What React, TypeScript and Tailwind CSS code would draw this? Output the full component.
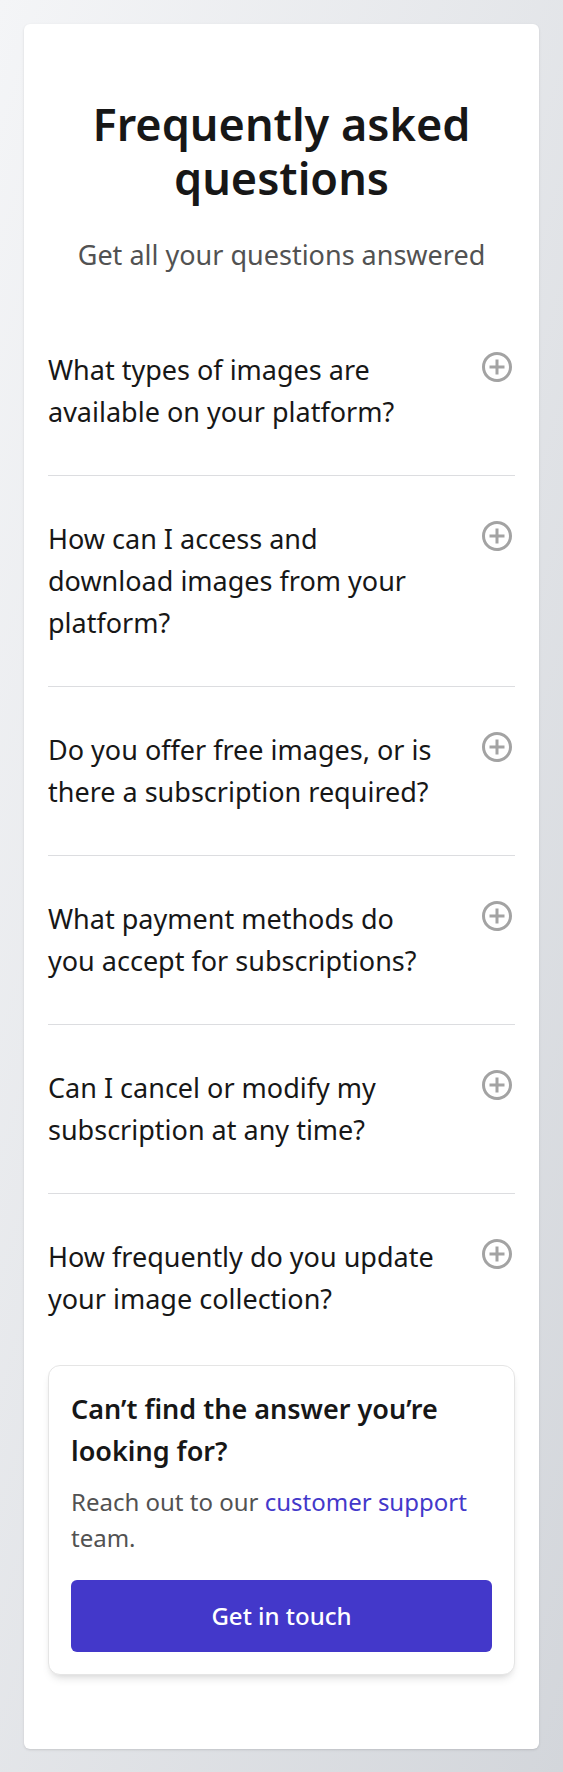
import { MdOutlineAddCircleOutline } from "react-icons/md";

const questions = [
  "What types of images are available on your platform?",
  "How can I access and download images from your platform?",
  "Do you offer free images, or is there a subscription required?",
  "What payment methods do you accept for subscriptions?",
  "Can I cancel or modify my subscription at any time?",
  "How frequently do you update your image collection?",
];

function FaqItem({ question, last }: { question: string; last: boolean }) {
  return (
    <div className={last ? "pt-[42px] pb-[45px]" : "py-[42px] border-b-[1.5px] border-[#dcdde0]"}>
      <div className="flex items-start justify-between gap-[36px]">
        <p className="flex-1 text-[27px] leading-[42px] text-[#171717]">{question}</p>
        <MdOutlineAddCircleOutline className="w-[36px] h-[36px] shrink-0 text-[#a3a3a3]" />
      </div>
    </div>
  );
}

export default function App() {
  return (
    <div
      className="min-h-screen p-6 bg-gradient-to-br from-[#f4f5f7] to-[#d3d6db]"
      style={{ fontFamily: '"Noto Sans", "Open Sans", sans-serif' }}
    >
      <div className="bg-white rounded-[6px] shadow-sm px-6 pt-[73px] pb-[74px]">
        <h1 className="text-center text-[45px] leading-[54px] font-semibold text-[#171717]">
          Frequently asked questions
        </h1>
        <p className="mt-[29px] text-center text-[27px] leading-[42px] text-[#525252]">
          Get all your questions answered
        </p>

        <div className="mt-[30.5px]">
          {questions.map((q, i) => (
            <FaqItem key={q} question={q} last={i === questions.length - 1} />
          ))}
        </div>

        {/* contact box */}
        <div className="rounded-[12px] border-[1.5px] border-[#e5e5e5] bg-white p-[22px] shadow-[0_6px_10px_-3px_rgba(0,0,0,0.12),0_3px_6px_-3px_rgba(0,0,0,0.08)]">
          <h2 className="text-[27px] leading-[42px] font-semibold text-[#171717]">
            Can’t find the answer you’re looking for?
          </h2>
          <p className="mt-[12px] text-[24px] leading-[36px] text-[#525252]">
            Reach out to our <span className="text-[#4338ca]">customer support</span> team.
          </p>
          <button className="mt-[24px] w-full h-[72px] rounded-[6px] bg-[#4338ca] text-white text-[24px] font-medium">
            Get in touch
          </button>
        </div>
      </div>
    </div>
  );
}
